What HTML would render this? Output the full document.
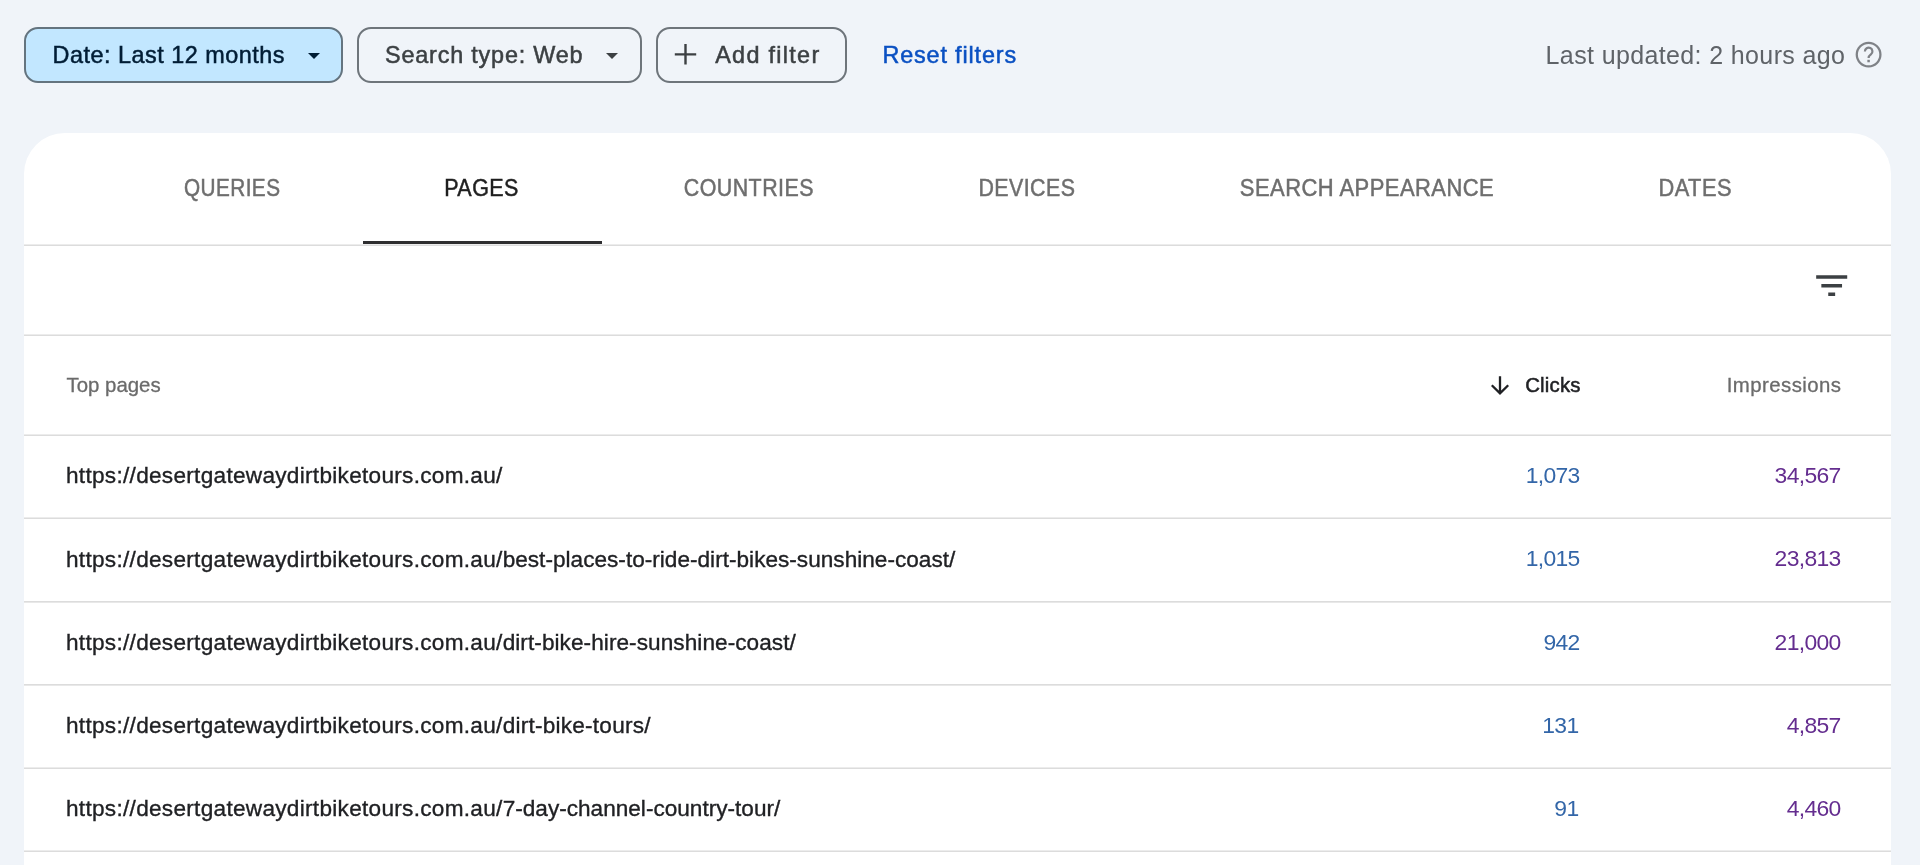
<!DOCTYPE html>
<html lang="en">
<head>
<meta charset="utf-8">
<title>Performance - Pages</title>
<style>
*{box-sizing:border-box;margin:0;padding:0}
html,body{width:1920px;height:865px;overflow:hidden;background:#f0f4f9}
body{position:relative;font-family:"Liberation Sans",sans-serif;color:#202124;-webkit-font-smoothing:antialiased}
.abs{position:absolute;white-space:nowrap}
/* chips */
.chip{position:absolute;top:27px;height:56px;border:2px solid #6e757b;border-radius:14px}
.chip.on{background:#c2e7ff;border-color:#64747f}
.ct{position:absolute;top:0px;height:52px;line-height:52px;font-size:23.4px;color:#3c4043;white-space:nowrap;-webkit-text-stroke:.5px currentColor}
.chip.on .ct{color:#001d35}
.tri{position:absolute;top:24.3px;width:0;height:0;border-left:6.4px solid transparent;border-right:6.4px solid transparent;border-top:6.8px solid #3c4043}
.chip.on .tri{border-top-color:#001d35}
/* card */
#card{position:absolute;left:24px;top:133px;width:1867px;height:760px;background:#fff;border-radius:41px 41px 0 0}
.hl{position:absolute;left:0;width:1867px;height:2px;background:linear-gradient(#ececec 0 50%,#dcdcdc 50% 100%)}
.hl.r{background:linear-gradient(#dcdcdc 0 50%,#e8e8e8 50% 100%)}
.tab{position:absolute;top:27.3px;height:56px;line-height:56px;font-size:23.3px;color:#6e6e6e;text-align:center;white-space:nowrap;-webkit-text-stroke:.5px currentColor}
.tab.sel{color:#1f1f1f}
#ind{position:absolute;left:339px;top:108px;width:238.6px;height:3px;background:#2e2e30}
.th{position:absolute;top:237px;height:30px;line-height:30px;font-size:20.4px;color:#6b6b6b;white-space:nowrap;-webkit-text-stroke:.3px currentColor}
.row{position:absolute;left:0;width:1867px;height:83.3px}
.row .u{position:absolute;left:42px;top:.3px;height:83.3px;line-height:81px;font-size:22.6px;color:#202124;white-space:nowrap;letter-spacing:.29px;-webkit-text-stroke:.35px #202124}
.row .c,.row .i{position:absolute;top:0;height:83.3px;line-height:80.8px;font-size:22.9px;text-align:right;white-space:nowrap;letter-spacing:-.65px;margin-right:.8px}
.row .c{right:310.5px;color:#3366a8}
.row .i{right:49.5px;color:#642d8f}
.tab b{display:inline-block;font-weight:normal;transform-origin:50% 50%;letter-spacing:.5px;margin-right:-.5px}
.row .u i{font-style:normal}
#root{position:absolute;left:0;top:0;width:1920px;height:865px;overflow:hidden;will-change:transform}
</style>
</head>
<body>
<div id="root">

<!-- filter chips -->
<div class="chip on" style="left:24.3px;width:319px">
  <span class="ct" id="t_chip1" style="left:26.2px;letter-spacing:.51px">Date: Last 12 months</span>
  <span class="tri" style="left:281.5px"></span>
</div>
<div class="chip" style="left:357.3px;width:284.7px">
  <span class="ct" id="t_chip2" style="left:25.7px;letter-spacing:.81px">Search type: Web</span>
  <span class="tri" style="left:246.5px"></span>
</div>
<div class="chip" style="left:655.8px;width:191.5px">
  <svg class="abs" style="left:15px;top:13.3px" width="25" height="25" viewBox="0 0 25 25"><path d="M1.8 12.4H23.2M12.5 2V22.6" stroke="#3c4043" stroke-width="2.4" fill="none"/></svg>
  <span class="ct" id="t_chip3" style="left:57.4px;letter-spacing:1.3px">Add filter</span>
</div>
<span class="abs" id="t_reset" style="left:882.4px;top:28.7px;height:52px;line-height:52px;font-size:23.4px;letter-spacing:.85px;color:#0a50c2;-webkit-text-stroke:.5px #0a50c2">Reset filters</span>

<span class="abs" id="t_upd" style="left:1545.6px;top:29px;height:52px;line-height:52px;font-size:25px;letter-spacing:.37px;color:#5f6368">Last updated: 2 hours ago</span>
<svg class="abs" style="left:1852.8px;top:39.4px" width="31.2" height="31.2" viewBox="0 0 24 24"><circle cx="12" cy="12" r="9.1" fill="none" stroke="#7f8287" stroke-width="1.75"/><path d="M9.15 9.55a2.9 2.9 0 1 1 4.65 2.3c-1.05.8-1.8 1.35-1.8 2.7" fill="none" stroke="#7f8287" stroke-width="1.7"/><rect x="11.05" y="16" width="1.9" height="1.9" fill="#7f8287"/></svg>

<!-- card -->
<div id="card">
  <span class="tab"  style="left:77px;width:261.6px"><b id="t_tab1" style="transform:scaleX(0.891)">QUERIES</b></span>
  <span class="tab sel"  style="left:338px;width:238.7px"><b id="t_tab2" style="transform:scaleX(0.922)">PAGES</b></span>
  <span class="tab"  style="left:577px;width:295px"><b id="t_tab3" style="transform:scaleX(0.918)">COUNTRIES</b></span>
  <span class="tab"  style="left:872.2px;width:260px"><b id="t_tab4" style="transform:scaleX(0.917)">DEVICES</b></span>
  <span class="tab"  style="left:1133px;width:419.5px"><b id="t_tab5" style="transform:scaleX(0.942)">SEARCH APPEARANCE</b></span>
  <span class="tab"  style="left:1552px;width:237px"><b id="t_tab6" style="transform:scaleX(0.936)">DATES</b></span>
  <div id="ind"></div>
  <div class="hl" style="top:111px"></div>

  <svg class="abs" style="left:1786.8px;top:131.9px" width="41.4" height="41.4" viewBox="0 0 24 24"><path d="M10 18h4v-2h-4v2zM3 6v2h18V6H3zm3 7h12v-2H6v2z" fill="#3c4043"/></svg>
  <div class="hl" style="top:201px"></div>

  <span class="th" id="t_th1" style="left:42.5px">Top pages</span>
  <svg class="abs" style="left:1464px;top:240px" width="24" height="24" viewBox="0 0 24 24"><path d="M12 3.2V20.4M3.8 12.2L12 20.4L20.2 12.2" fill="none" stroke="#202124" stroke-width="2.3"/></svg>
  <span class="th" id="t_th2" style="right:310.3px;color:#202124;letter-spacing:.2px;-webkit-text-stroke:.5px #202124">Clicks</span>
  <span class="th" id="t_th3" style="right:49.5px;letter-spacing:.45px">Impressions</span>
  <div class="hl" style="top:301px"></div>

  <div class="row" style="top:302px"><span class="u" id="t_u1">https://desertgatewaydirtbiketours.com.au/</span><span class="c" id="t_c1">1,073</span><span class="i" id="t_i1">34,567</span></div>
  <div class="hl" style="top:384px"></div>
  <div class="row" style="top:385.3px"><span class="u" id="t_u2">https://desertgatewaydirtbiketours.com.au/<i style="letter-spacing:0.013px">best-places-to-ride-dirt-bikes-sunshine-coast/</i></span><span class="c" id="t_c2">1,015</span><span class="i" id="t_i2">23,813</span></div>
  <div class="hl r" style="top:468px"></div>
  <div class="row" style="top:468.6px"><span class="u" id="t_u3">https://desertgatewaydirtbiketours.com.au/<i style="letter-spacing:0.064px">dirt-bike-hire-sunshine-coast/</i></span><span class="c" id="t_c3">942</span><span class="i" id="t_i3">21,000</span></div>
  <div class="hl r" style="top:551px"></div>
  <div class="row" style="top:551.9px"><span class="u" id="t_u4">https://desertgatewaydirtbiketours.com.au/<i style="letter-spacing:0.23px">dirt-bike-tours/</i></span><span class="c" id="t_c4" style="right:311.7px">131</span><span class="i" id="t_i4">4,857</span></div>
  <div class="hl" style="top:634px"></div>
  <div class="row" style="top:635.2px"><span class="u" id="t_u5">https://desertgatewaydirtbiketours.com.au/<i style="letter-spacing:0.004px">7-day-channel-country-tour/</i></span><span class="c" id="t_c5" style="right:311.7px">91</span><span class="i" id="t_i5">4,460</span></div>
  <div class="hl" style="top:717px"></div>
</div>

</div>
</body>
</html>
